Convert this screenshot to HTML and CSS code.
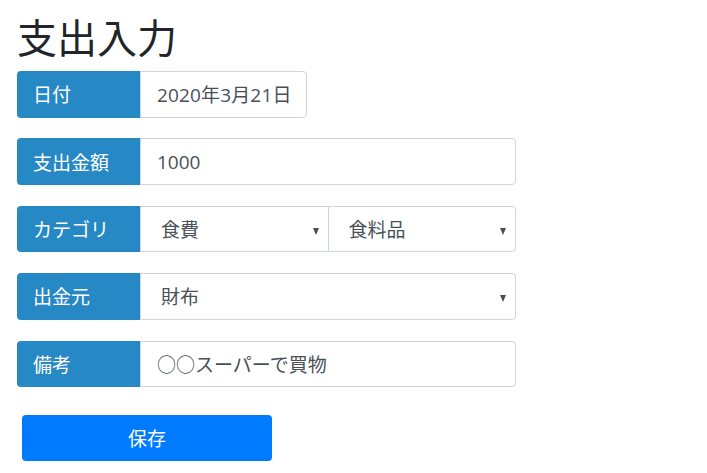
FILE: index.html
```html
<!DOCTYPE html>
<html lang="ja">
<head>
<meta charset="utf-8">
<title>支出入力</title>
<link rel="stylesheet" href="styles.css">
</head>
<body>
<main class="page">
  <h1 class="title">支出入力</h1>
  <form class="form">
    <div class="row">
      <span class="label">日付</span>
      <div class="field field-date">2020年3月21日</div>
    </div>
    <div class="row">
      <span class="label">支出金額</span>
      <div class="field field-grow">1000</div>
    </div>
    <div class="row">
      <span class="label">カテゴリ</span>
      <div class="field field-grow select">食費<span class="arrow"></span></div>
      <div class="field field-grow select select-last">食料品<span class="arrow"></span></div>
    </div>
    <div class="row">
      <span class="label">出金元</span>
      <div class="field field-grow select select-last">財布<span class="arrow"></span></div>
    </div>
    <div class="row">
      <span class="label">備考</span>
      <div class="field field-grow">○○スーパーで買物</div>
    </div>
    <button type="button" class="btn">保存</button>
  </form>
</main>
</body>
</html>
```
FILE: styles.css
```css
* { box-sizing: border-box; }
html, body { margin: 0; padding: 0; background: #fff; }
body {
  font-family: "Open Sans", "Noto Sans CJK JP", sans-serif;
  color: #212529;
}
.page {
  padding: 14px 0 0 17px;
}
.title {
  margin: 0 0 9px 0;
  font-size: 40px;
  font-weight: 400;
  line-height: 48px;
  color: #212529;
}
.form {
  width: 499px;
  display: flex;
  flex-direction: column;
  align-items: flex-start;
}
.row {
  display: flex;
  width: 100%;
  height: 46.5px;
  margin-bottom: 20.9px;
  font-size: 19px;
  white-space: nowrap;
}
.label {
  flex: 0 0 123px;
  display: flex;
  align-items: center;
  padding-left: 16px;
  background: #2688c5;
  color: #fff;
  border-radius: 4px 0 0 4px;
}
.field {
  display: flex;
  align-items: center;
  padding: 0 16px;
  border: 1px solid #ced4da;
  color: #495057;
  background: #fff;
  position: relative;
}
.field:last-child { border-radius: 0 4px 4px 0; }
.field-date { width: 167px; letter-spacing: 0.15px; }
.field-grow { flex: 1 1 0; }
.select + .select { margin-left: -1px; }
.select { padding-left: 20px; }
.arrow {
  position: absolute;
  right: 9px;
  top: 21px;
  width: 0;
  height: 0;
  border-left: 3.5px solid transparent;
  border-right: 3.5px solid transparent;
  border-top: 7px solid #4d4d4d;
}
.btn {
  margin: 7px 0 0 5px;
  width: 250px;
  height: 46px;
  border: none;
  border-radius: 4px;
  background: #007bff;
  color: #fff;
  font-family: "Open Sans", "Noto Sans CJK JP", sans-serif;
  font-size: 19px;
}
```
